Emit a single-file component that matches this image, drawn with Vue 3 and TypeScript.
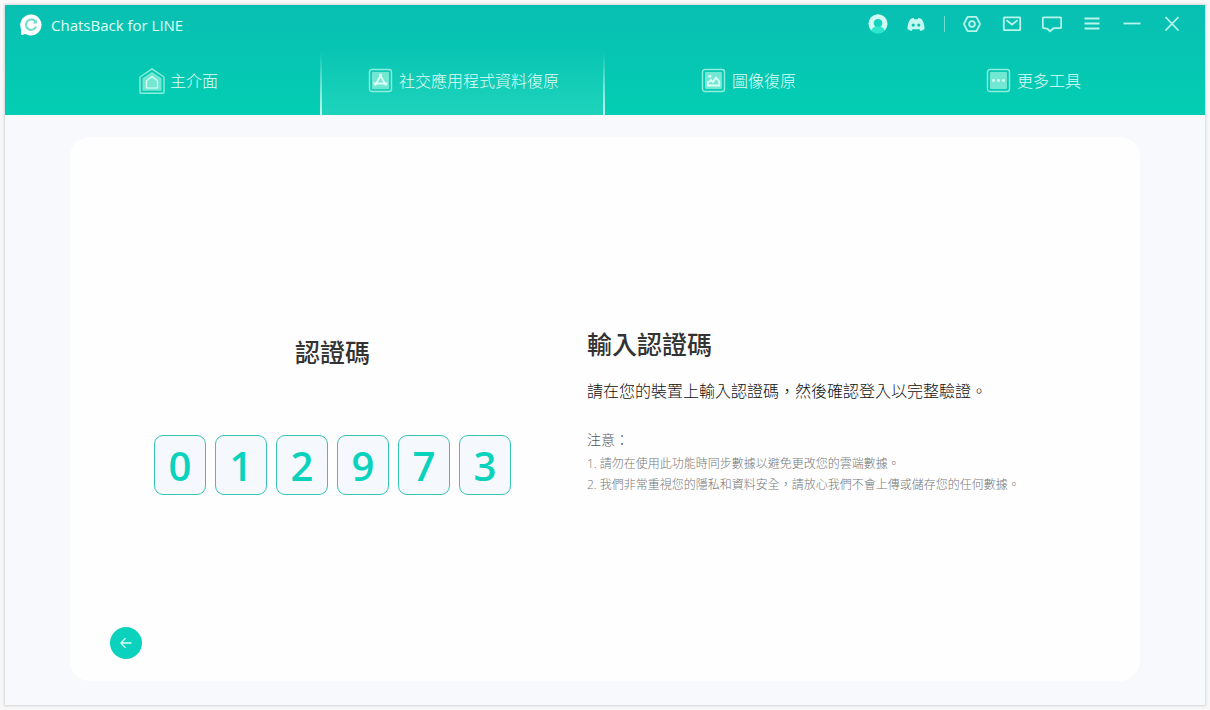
<script setup lang="ts">
interface Tab {
  id: string
  label: string
}

const tabs: Tab[] = [
  { id: 'home', label: '主介面' },
  { id: 'social', label: '社交應用程式資料復原' },
  { id: 'photo', label: '圖像復原' },
  { id: 'tools', label: '更多工具' },
]
const active = 'social'
const digits: string[] = ['0', '1', '2', '9', '7', '3']
</script>

<template>
  <div class="window">
    <header class="header">
      <div class="titlebar">
        <svg class="logo" viewBox="0 0 22 22" aria-hidden="true">
          <path d="M11 .5A10.500 10.500 0 1 1 5.600 20L1 21.300V15A10.500 10.500 0 0 1 11 .5Z" fill="#fff" />
          <path d="M15.800 8.300A5.200 5.200 0 1 0 16 12.600" fill="none" stroke="#6fdcca" stroke-width="2" />
          <path d="M16.900 5.400V9.600H12.600Z" fill="#6fdcca" />
        </svg>
        <span class="title">ChatsBack for LINE</span>
        <div class="actions">
          <div class="account">
            <button type="button" aria-label="帳戶">
              <svg viewBox="0 0 20 20">
                <circle cx="10" cy="10.500" r="9.300" fill="#2fe5cb" />
                <path d="M3.300 16.500A9.500 9.500 0 1 1 16.700 16.500C16 14.200 14.500 13.200 12.700 12.800A4.400 4.400 0 1 0 7.300 12.800C5.500 13.200 4 14.200 3.300 16.500Z" fill="#d2fbf3" />
                <circle cx="10" cy="9" r="3.700" fill="#16d2bd" />
              </svg>
            </button>
            <button type="button" aria-label="Discord">
              <svg viewBox="0 0 20 20">
                <path d="M4.300 5.200C5.500 4.500 6.600 4.200 7.700 4.100L8.300 5.200H11.700L12.300 4.100C13.400 4.200 14.500 4.500 15.700 5.200C17.700 8.200 18.700 11.500 18.500 14.900C17.200 16 15.900 16.600 14.500 16.900L13.400 15.200H6.600L5.500 16.900C4.100 16.600 2.800 16 1.500 14.900C1.300 11.500 2.300 8.200 4.300 5.200Z" fill="#c6f8ef" />
                <circle cx="7.200" cy="11.100" r="1.600" fill="#08c0b2" />
                <circle cx="12.800" cy="11.100" r="1.600" fill="#08c0b2" />
              </svg>
            </button>
          </div>
          <span class="divider"></span>
          <button type="button" aria-label="設定">
            <svg viewBox="0 0 20 20" class="line">
              <path d="M6.300 2.800H13.700Q14.300 2.800 14.600 3.300L17.800 9.300Q18.100 10 17.800 10.700L14.600 16.700Q14.300 17.200 13.700 17.200H6.300Q5.700 17.200 5.400 16.700L2.200 10.700Q1.900 10 2.200 9.300L5.400 3.300Q5.700 2.800 6.300 2.800Z" />
              <circle cx="10" cy="10" r="2.900" />
            </svg>
          </button>
          <button type="button" aria-label="郵件">
            <svg viewBox="0 0 20 20" class="line">
              <rect x="1.800" y="3.300" width="16.400" height="12.900" rx=".6" />
              <path d="M4.500 6.300L10 10.500L15.500 6.300" />
            </svg>
          </button>
          <button type="button" aria-label="意見回饋">
            <svg viewBox="0 0 20 20" class="line">
              <path d="M2 3.300H18Q19.200 3.300 19.200 4.500V13Q19.200 14.200 18 14.200H11.500L8 17.200L5.500 14.800L2 14.200Q.8 14.200 .8 13V4.500Q.8 3.300 2 3.300Z" />
            </svg>
          </button>
          <button type="button" aria-label="選單">
            <svg viewBox="0 0 20 20" class="line"><path d="M2.500 4.500H17.500M2.500 9.500H17.500M2.500 14.500H17.500" /></svg>
          </button>
          <button type="button" aria-label="最小化">
            <svg viewBox="0 0 20 20" class="line"><path d="M1.500 9.500H18.500" /></svg>
          </button>
          <button type="button" aria-label="關閉">
            <svg viewBox="0 0 20 20" class="line"><path d="M3.500 3L16.500 16.500M16.500 3L3.500 16.500" /></svg>
          </button>
        </div>
      </div>

      <nav class="tabs">
        <button
          v-for="tab in tabs"
          :key="tab.id"
          type="button"
          class="tab"
          :class="{ active: tab.id === active }"
          :aria-current="tab.id === active ? 'page' : undefined"
        >
          <svg v-if="tab.id === 'home'" class="tab-icon" viewBox="0 0 26 26">
            <path class="frame" d="M13 .8L25 9V24Q25 25.300 23.700 25.300H2.300Q1 25.300 1 24V9Z" />
            <path class="fill" d="M13 4L22.500 10.300V22.800H3.500V10.300Z" />
            <path class="glyph" d="M13 8.500L18.500 12.700V20H7.500V12.700Z" />
          </svg>
          <svg v-else class="tab-icon" viewBox="0 0 26 26">
            <rect class="frame" x="1.500" y="1.500" width="22" height="22" rx="2.500" />
            <rect class="fill" x="4" y="4" width="17" height="17" rx="1" />
            <template v-if="tab.id === 'social'">
              <path class="glyph bold" d="M11.500 6L18 17.500M13.500 6L7 17.500M5.500 15.500H19.500" />
            </template>
            <template v-else-if="tab.id === 'photo'">
              <path class="glyph bold" d="M6.800 13.500V17.500H18.300V13.500L15 9.500L12 14L10 12L6.800 15" />
              <circle cx="8.800" cy="8.300" r="1.500" fill="#ddfff8" />
            </template>
            <template v-else>
              <circle cx="7.500" cy="12.500" r="1.400" fill="#ddfff8" />
              <circle cx="12.500" cy="12.500" r="1.400" fill="#ddfff8" />
              <circle cx="17.500" cy="12.500" r="1.400" fill="#ddfff8" />
            </template>
          </svg>
          <span>{{ tab.label }}</span>
        </button>
      </nav>
    </header>

    <main class="main">
      <section class="card">
        <div class="content">
          <div class="code">
            <h2>認證碼</h2>
            <div class="digits">
              <span v-for="(digit, i) in digits" :key="i" class="digit">{{ digit }}</span>
            </div>
          </div>
          <div class="guide">
            <h1>輸入認證碼</h1>
            <p class="lead">請在您的裝置上輸入認證碼，然後確認登入以完整驗證。</p>
            <p class="note-title">注意：</p>
            <p class="note">1. 請勿在使用此功能時同步數據以避免更改您的雲端數據。</p>
            <p class="note">2. 我們非常重視您的隱私和資料安全，請放心我們不會上傳或儲存您的任何數據。</p>
          </div>
        </div>
        <button type="button" class="back" aria-label="返回">
          <svg viewBox="0 0 12 12"><path d="M11.500 6H1M5.500 1.300L.8 6L5.500 10.700" /></svg>
        </button>
      </section>
    </main>
  </div>
</template>

<style>
body {
  margin: 0;
  background: #f8f8f8;
}
</style>

<style scoped>
* {
  box-sizing: border-box;
}

.window {
  display: flex;
  flex-direction: column;
  min-height: calc(100vh - 10px);
  margin: 5px;
  background: #f8f9fc;
  box-shadow: 0 0 2px 1px #d4d6d8;
  font-family: "Open Sans", "Noto Sans CJK TC", sans-serif;
  color: #333;
}

button {
  padding: 0;
  border: 0;
  background: none;
  font: inherit;
  color: inherit;
  cursor: pointer;
}

svg {
  display: block;
}

.header {
  background: linear-gradient(#08bfb2, #03ceb3);
  color: #e0fdf8;
}

.titlebar {
  display: flex;
  align-items: center;
  height: 40px;
  padding: 0 23px 0 15px;
}

.logo {
  width: 22px;
  height: 22px;
}

.title {
  margin-left: 9px;
  font-size: 15px;
  line-height: 22px;
}

.actions {
  display: flex;
  align-items: center;
  gap: 20px;
  margin-left: auto;
  padding-bottom: 2px;
}

.account {
  display: flex;
  gap: 18px;
}

.actions svg {
  width: 20px;
  height: 20px;
}

.divider {
  width: 1px;
  height: 16px;
  margin: 0 -3px 0 -2px;
  background: #6fddd2;
}

.line {
  fill: none;
  stroke: #b9f5eb;
  stroke-width: 1.8;
}

.tabs {
  display: grid;
  grid-template-columns: repeat(4, 1fr);
  height: 70px;
  padding: 0 30px;
}

.tab {
  position: relative;
  display: flex;
  align-items: center;
  justify-content: center;
  gap: 5px;
  padding: 2px 0 0 2px;
  font-size: 16px;
  font-weight: 300;
  line-height: 24px;
}

.tab.active {
  background: linear-gradient(rgba(255, 255, 255, 0), rgba(255, 255, 255, 0.11));
}

.tab.active::before,
.tab.active::after {
  content: "";
  position: absolute;
  top: 8px;
  bottom: 0;
  width: 2px;
  background: linear-gradient(rgba(255, 255, 255, 0), #c5f7ee);
}

.tab.active::before {
  left: 0;
}

.tab.active::after {
  right: 0;
}

.tab-icon {
  width: 26px;
  height: 26px;
}

.frame {
  fill: none;
  stroke: #8eeddc;
  stroke-width: 1.4;
}

.fill {
  fill: #72e7d2;
}

.glyph {
  fill: none;
  stroke: #ddfff8;
  stroke-width: 1.2;
}

.glyph.bold {
  stroke-width: 1.8;
}

.main {
  display: flex;
  flex: 1;
  padding: 22px 65px 24px;
}

.card {
  display: grid;
  flex: 1;
  grid-template-rows: 1fr auto 1fr;
  padding: 25px 40px 22px;
  border-radius: 20px;
  background: #fefefe;
}

.content {
  display: flex;
  grid-row: 2;
  align-items: flex-end;
  gap: 76px;
  padding-left: 44px;
}

h1,
h2 {
  margin: 0;
  font-size: 25px;
  font-weight: 500;
  line-height: 36px;
}

h2 {
  margin-bottom: 65px;
  text-align: center;
}

.digits {
  display: flex;
  gap: 9px;
}

.digit {
  width: 52px;
  height: 60px;
  border: 1px solid #35c4b5;
  border-radius: 9px;
  background: #f5f8fc;
  color: #0bd2bc;
  font-size: 40px;
  font-weight: 600;
  line-height: 60px;
  text-align: center;
}

p {
  margin: 0;
  font-weight: 300;
}

.lead {
  margin: 17px 0 26px;
  color: #111;
  font-size: 16px;
  line-height: 24px;
}

.note-title {
  margin-bottom: 2px;
  color: #555;
  font-size: 14px;
  line-height: 22px;
}

.note {
  color: #777;
  font-size: 12px;
  line-height: 21px;
}

.back {
  display: grid;
  grid-row: 3;
  align-self: end;
  place-items: center;
  width: 32px;
  height: 32px;
  border-radius: 50%;
  background: #0bd2bc;
}

.back svg {
  width: 12px;
  height: 12px;
  fill: none;
  stroke: #d8fff9;
  stroke-width: 1.3;
}
</style>
